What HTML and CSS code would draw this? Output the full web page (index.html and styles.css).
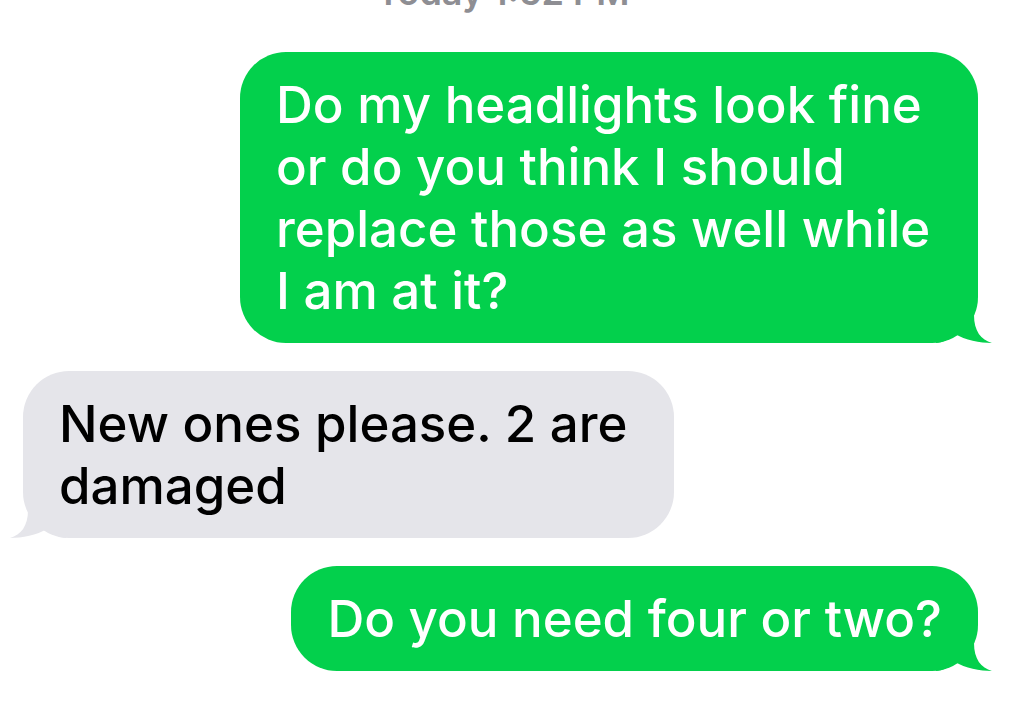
FILE: index.html
```html
<!DOCTYPE html>
<html lang="en">

<head>
  <meta charset="UTF-8" />
  <meta name="viewport" content="width=device-width, initial-scale=1" />
  <title>Messages</title>
  <link rel="stylesheet" href="styles.css">
</head>

<body>
  <div class="thread">

    <div class="stamp">Today 1:52 PM</div>

    <!-- sent -->
    <div class="bubble out">
      Do my headlights look fine or do you think I should replace those as well while I am at it?
      <svg class="tail" viewBox="0 0 60 50" aria-hidden="true">
        <path d="M0 0 H38 V22 C38 38 45 47 56 50 C44 50 29 47 19 41 C13 46 6 50 0 50 Z" />
      </svg>
    </div>

    <!-- received -->
    <div class="bubble in">
      New ones please. 2 are damaged
      <svg class="tail" viewBox="0 0 60 50" aria-hidden="true">
        <path d="M0 0 H38 V22 C38 38 45 47 56 50 C44 50 29 47 19 41 C13 46 6 50 0 50 Z" />
      </svg>
    </div>

    <!-- sent -->
    <div class="bubble out">
      Do you need four or two?
      <svg class="tail" viewBox="0 0 60 50" aria-hidden="true">
        <path d="M0 0 H38 V22 C38 38 45 47 56 50 C44 50 29 47 19 41 C13 46 6 50 0 50 Z" />
      </svg>
    </div>

  </div>
</body>

</html>
```

FILE: styles.css
```css
* {
  box-sizing: border-box;
}

body {
  margin: 0;
  background: #fff;
  font-family: Inter, "Liberation Sans", sans-serif;
  overflow: hidden;
}

.thread {
  display: flex;
  flex-direction: column;
  gap: 28px;
}

.stamp {
  margin-top: -26px;
  margin-bottom: 14px;
  padding-right: 18px;
  text-align: center;
  font-size: 36px;
  line-height: 36px;
  font-weight: 600;
  color: #8e8e93;
}

.bubble {
  position: relative;
  isolation: isolate;
  padding: 22px 36px 21px;
  border-radius: 46px;
  font-size: 51px;
  line-height: 62px;
  font-weight: 500;
}

.out {
  align-self: flex-end;
  max-width: 738px;
  margin-right: 46px;
  background: #03d04c;
  color: #fff;
}

.in {
  align-self: flex-start;
  max-width: 651px;
  margin-left: 23px;
  background: #e5e5ea;
  color: #000;
}

.tail {
  position: absolute;
  z-index: -1;
  bottom: 0;
  width: 60px;
  height: 50px;
}

.out .tail {
  right: -18px;
  fill: #03d04c;
}

.in .tail {
  left: -17px;
  transform: scaleX(-1);
  fill: #e5e5ea;
}
```
